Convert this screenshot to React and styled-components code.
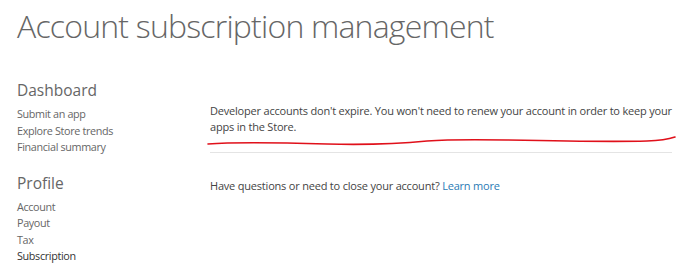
import React from 'react';
import styled, {createGlobalStyle} from "styled-components";

const GlobalStyle = createGlobalStyle`
  body {
    margin: 0;
    background: #fff;
    font-family: "Open Sans", "Noto Sans", sans-serif;
  }
`

const dashboardLinks = ['Submit an app', 'Explore Store trends', 'Financial summary'];
const profileLinks = ['Account', 'Payout', 'Tax', 'Subscription'];

const App = () => {
  return (
    <Page>
      <GlobalStyle/>
      <Title>Account subscription management</Title>
      <Body>
        <Sidebar>
          <NavGroup>
            <NavHeading>Dashboard</NavHeading>
            {dashboardLinks.map(l => <NavLink key={l}>{l}</NavLink>)}
          </NavGroup>
          <NavGroup>
            <NavHeading>Profile</NavHeading>
            {profileLinks.map(l => <NavLink key={l} active={l === 'Subscription'}>{l}</NavLink>)}
          </NavGroup>
        </Sidebar>

        <Main>
          <Notice>
            Developer accounts don't expire. You won't need to renew your account in order to keep your apps in the Store.
            <Scribble viewBox="0 0 470 12" preserveAspectRatio="none">
              <path
                d="M1 8 C 20 6.5, 50 6, 120 8 C 160 9, 190 8, 220 5 C 240 3.5, 270 3.5, 300 4 C 350 5, 400 6, 440 5 C 455 4.5, 462 3, 468 1"
                fill="none"
                stroke="#e0101a"
                strokeWidth="1.6"
                strokeLinecap="round"
              />
            </Scribble>
          </Notice>
          <Rule/>
          <Help>
            Have questions or need to close your account? <Link href="#">Learn more</Link>
          </Help>
        </Main>
      </Body>
    </Page>
  );
}

const Page = styled.div`
  padding: 2px 0 0 17px;
  width: 680px;
  height: 275px;
  box-sizing: border-box;
  overflow: hidden;
`

const Title = styled.h1`
  margin: 0;
  font-size: 32px;
  font-weight: 300;
  line-height: 48px;
  letter-spacing: -0.8px;
  color: #666;
  white-space: nowrap;
`

const Body = styled.div`
  display: flex;
  margin-top: 30px;
`

const Sidebar = styled.nav`
  width: 193px;
  display: flex;
  flex-direction: column;
  gap: 17px;
`

const NavGroup = styled.div`
  display: flex;
  flex-direction: column;
`

const NavHeading = styled.h2`
  margin: 0 0 6px;
  font-size: 15.5px;
  font-weight: 400;
  line-height: 20px;
  color: #666;
`

const NavLink = styled.a`
  font-size: 10.8px;
  line-height: 16.5px;
  letter-spacing: -0.35px;
  color: ${props => props.active ? "#333" : "#666"};
  text-decoration: none;
  cursor: pointer;
`

const Main = styled.section`
  width: 462px;
  padding-top: 23px;
`

const Notice = styled.p`
  position: relative;
  margin: 0;
  font-size: 11px;
  line-height: 16px;
  letter-spacing: -0.2px;
  color: #444;
  padding-bottom: 17px;
`

const Scribble = styled.svg`
  position: absolute;
  left: -3px;
  top: 33px;
  width: 470px;
  height: 12px;
`

const Rule = styled.hr`
  margin: 0;
  border: none;
  border-top: 1px solid #e4e4e4;
`

const Help = styled.p`
  margin: 25px 0 0;
  font-size: 11px;
  line-height: 16px;
  letter-spacing: -0.2px;
  color: #444;
`

const Link = styled.a`
  color: #2b7bb5;
  text-decoration: none;
`

export default App;
